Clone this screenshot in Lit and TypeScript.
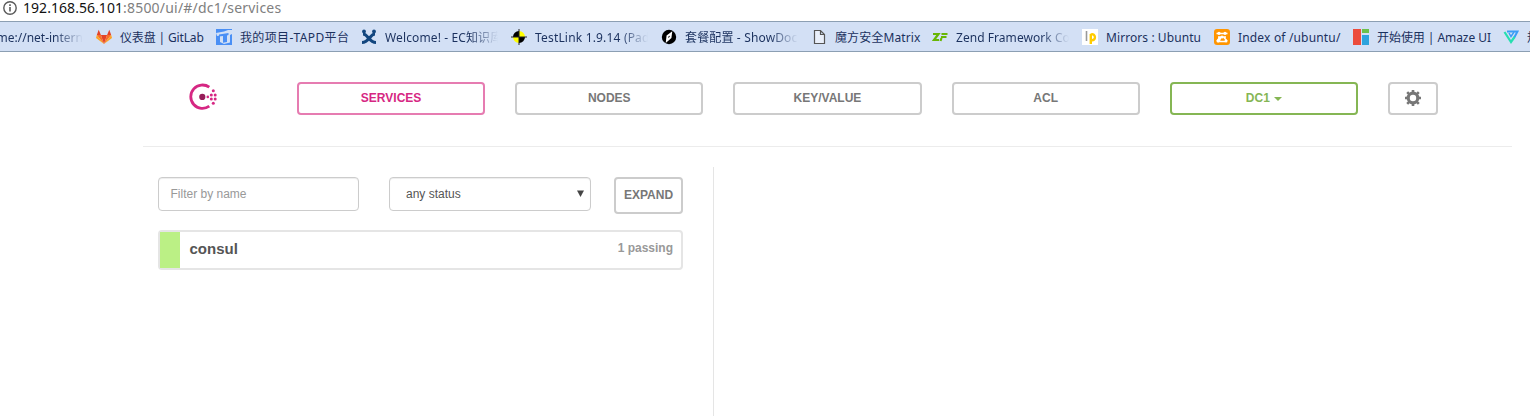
import { LitElement, html, css, svg } from "lit";
import { customElement } from "lit/decorators.js";

interface Bookmark {
  label: string;
  width: number;
  spacing: number;
  icon: unknown;
  fade?: boolean;
}

const ICONS = {
  gitlab: svg`<path fill="#e24329" d="M8 15 4.9 6h6.2z"/><path fill="#fc6d26" d="M8 15 4.9 6H.8zM8 15l3.1-9h4.1z"/><path fill="#fca326" d="M.8 6 0 9.1 8 15zM15.200 6l.8 3.100L8 15z"/><path fill="#e24329" d="M.8 6 2.700.8 4.900 6zM15.200 6 13.300.8 11.100 6z"/>`,
  tapd: svg`<path fill="#4a8ff5" d="M0 0h16v16H0z"/><path fill="#d3e0f5" d="M0 4 8 2.500 12 1h4v4l-2 1v7.500L8 15l-4-2V6.500L1 7z"/><path fill="#4a8ff5" d="M3 5.500 12.500 4v2L11 6.500V13l-4 .8V7l-4 .5z"/>`,
  confluence: svg`<path fill="none" stroke="#12467f" stroke-width="3" d="M2 5c5 0 6 8.500 13 8.500M14 5C9 5 8 13.500 1 13.500"/><circle cx="3" cy="2.500" r="1.900" fill="#12467f"/><circle cx="13" cy="2.500" r="1.900" fill="#12467f"/>`,
  testlink: svg`<path fill="#000" d="M8 2a6 6 0 0 0-6 6h6zM8 14a6 6 0 0 0 6-6H8z"/><path fill="#ff0" d="M8 2a6 6 0 0 1 6 6H8zM8 14a6 6 0 0 1-6-6h6z"/><path stroke="#222" d="M8 0v16M0 8h16"/>`,
  showdoc: svg`<circle cx="8" cy="8" r="7.200" fill="#000"/><path fill="none" stroke="#fff" stroke-width="2" d="M6 11.500 6.500 7 10 4.500 9.500 8.500z"/>`,
  page: svg`<path fill="#e9effa" stroke="#555" stroke-width="1.200" d="M3.500 1.500h6l4 4v9h-10zM9.500 1.500v4h4"/>`,
  zend: svg`<path fill="none" stroke="#68b604" stroke-width="2.200" d="M1 5h5.500L2 11h5M9.500 5H15.500M9 8h5.500M8.500 12l1-3"/>`,
  launchpad: svg`<path fill="#fff" d="M0 0h16v16H0z"/><path stroke="#999" stroke-width="1.600" d="M4.500 2v10"/><path fill="none" stroke="#fc0" stroke-width="2.400" d="M8.800 15V5M8.800 5.500c5-2 6 7 0 5.500"/>`,
  mirror: svg`<rect width="16" height="16" rx="3" fill="#ff9500"/><path fill="none" stroke="#fff" stroke-width="1.500" d="M2.500 4.500h11M4 8h8M6 8 3 12M7 8l-2 4.500h6M10 8.500l3 3.500"/><g fill="#fff"><circle cx="5" cy="4.300" r="1.600"/><circle cx="11" cy="4.300" r="1.600"/><circle cx="8" cy="8" r="1.500"/><circle cx="4" cy="12" r="1.500"/><circle cx="12" cy="12" r="1.500"/></g>`,
  amaze: svg`<path fill="#ec4c3c" d="M0 0h8v16H0z"/><path fill="#6cc04a" d="M9 0h7v4H9z"/><path fill="#2ea3dd" d="M9 6h7v10H9z"/>`,
  vector: svg`<path fill="none" stroke="#3a9cf5" stroke-width="2" d="M4 2.500h10.500L11 9"/><path fill="none" stroke="#25dfb0" stroke-width="2.200" d="M1.500 3 8 13l3.500-5"/><path fill="none" stroke="#3a9cf5" stroke-width="1.500" d="m6 4 2 3.500L11 3"/>`,
};

const BOOKMARKS: Bookmark[] = [
  { label: "仪表盘 | GitLab", width: 120, spacing: -0.15, icon: ICONS.gitlab },
  { label: "我的项目-TAPD平台", width: 145, spacing: 0.35, icon: ICONS.tapd },
  { label: "Welcome! - EC知识库", width: 150, spacing: 0.12, icon: ICONS.confluence, fade: true },
  { label: "TestLink 1.9.14 (Padawan)", width: 150, spacing: 0.18, icon: ICONS.testlink, fade: true },
  { label: "套餐配置 - ShowDoc", width: 150, spacing: 0.15, icon: ICONS.showdoc, fade: true },
  { label: "魔方安全Matrix", width: 121, spacing: 0.1, icon: ICONS.page },
  { label: "Zend Framework Coding", width: 150, spacing: 0.05, icon: ICONS.zend, fade: true },
  { label: "Mirrors : Ubuntu", width: 132, spacing: 0.08, icon: ICONS.launchpad },
  { label: "Index of /ubuntu/", width: 139, spacing: 0.17, icon: ICONS.mirror },
  { label: "开始使用 | Amaze UI", width: 150, spacing: -0.06, icon: ICONS.amaze },
  { label: "规范", width: 150, spacing: 0, icon: ICONS.vector },
];

@customElement("browser-chrome")
class BrowserChrome extends LitElement {
  static styles = css`
    :host { display: block; font-family: "Noto Sans", "Noto Sans CJK SC", sans-serif; }
    .address { display: flex; align-items: center; height: 21px; box-sizing: border-box; padding: 0 0 5px 3px; gap: 6px; font-size: 14px; line-height: 16px; color: #808080; white-space: pre; }
    .url { letter-spacing: 0.2px; }
    .address b { font-weight: 400; color: #111; letter-spacing: 0.05px; }
    .bar { display: flex; align-items: center; height: 31px; box-sizing: border-box; overflow: hidden; background: #d3e0f5; border-top: 1px solid #8c9fb3; border-bottom: 1px solid #8c9fb3; font-size: 12px; line-height: 20px; color: #1b315e; white-space: nowrap; }
    .first { flex: none; width: 83px; margin-right: 13px; padding-top: 2px; display: flex; justify-content: flex-end; overflow: hidden; }
    .item { flex: none; display: flex; align-items: center; gap: 8px; box-sizing: border-box; padding-right: 13px; }
    .item svg { flex: none; width: 16px; height: 16px; }
    .label { flex: 1; overflow: hidden; padding-top: 2px; }
    .item:not(.fade) .label { overflow: visible; }
    .fade .label, .first { -webkit-mask-image: linear-gradient(to left, transparent, #000 28px); mask-image: linear-gradient(to left, transparent, #000 28px); }
  `;

  render() {
    return html`
      <div class="address">
        <svg width="14" height="14" viewBox="0 0 14 14"><circle cx="7" cy="7" r="6.200" fill="none" stroke="#5a5a5a" stroke-width="1.400"/><path stroke="#5a5a5a" stroke-width="1.600" d="M7 6v4.500M7 3.300v1.600"/></svg>
        <span class="url"><b>192.168.56.101</b>:8500/ui/#/dc1/services</span>
      </div>
      <div class="bar">
        <div class="first"><span>me://net-intern</span></div>
        ${BOOKMARKS.map(
          (b) => html`<div class="item ${b.fade ? "fade" : ""}" style="width:${b.width}px">
            <svg viewBox="0 0 16 16">${b.icon}</svg>
            <span class="label" style="letter-spacing:${b.spacing}px">${b.label}</span>
          </div>`,
        )}
      </div>
    `;
  }
}

@customElement("app-root")
class AppRoot extends LitElement {
  static styles = css`
    :host { display: block; height: 416px; overflow: hidden; background: #fff; font-family: "Liberation Sans", Arial, sans-serif; font-size: 12px; color: #555; }
    .page { margin: 0 18px 0 143px; }
    .nav { display: flex; gap: 30px; height: 95px; box-sizing: border-box; padding: 30px 0 0 46px; border-bottom: 1px solid #ececec; }
    .logo { flex: none; width: 78px; }
    .logo svg { display: block; margin-top: 1px; }
    .btn { flex: none; display: flex; align-items: center; justify-content: center; box-sizing: border-box; border: 2px solid #ccc; border-radius: 4px; color: #777; font-weight: 700; background: #fff; }
    .tab { width: 188.200px; height: 33px; padding-bottom: 2px; }
    .services { border-color: #e67cb1; color: #d62783; }
    .dc { border-color: #85b654; color: #85b654; }
    .gear { width: 50px; height: 33px; padding-bottom: 1px; }
    .caret { margin: 3px 0 0 4px; border: 4px solid transparent; border-top-color: currentColor; border-bottom: 0; }
    .panel { width: 571px; height: 249px; margin-top: 20px; box-sizing: border-box; border-right: 1px solid #e5e5e5; padding: 10px 30px 0 15px; }
    .filters { display: flex; align-items: flex-start; }
    .field { display: flex; align-items: center; justify-content: space-between; box-sizing: border-box; height: 34px; border: 1px solid #ccc; border-radius: 4px; box-shadow: inset 0 1px 1px rgba(0, 0, 0, 0.075); }
    .name { width: 201px; padding: 0 12px 1px 11.500px; color: #999; }
    .status { width: 202px; margin-left: 30px; padding: 0 6px 1px 16px; }
    .expand { width: 69px; height: 37px; margin-left: 23px; padding-bottom: 1px; }
    .service { display: flex; margin-top: 16px; height: 40px; box-sizing: border-box; border: 2px solid #e5e5e5; border-radius: 4px; font-weight: 700; }
    .health { width: 20px; background: #bbf085; }
    .title { flex: 1; padding: 8px 0 0 9.500px; font-size: 15px; line-height: 17px; }
    .count { padding: 9px 8px 0 0; line-height: 14px; color: #999; }
  `;

  render() {
    return html`
      <browser-chrome></browser-chrome>
      <div class="page">
        <div class="nav">
          <div class="logo">
            <svg width="28" height="28" viewBox="0 0 28 28">
              <path fill="none" stroke="#d62783" stroke-width="2.800" d="M20.300 4.200A11.700 11.700 0 1 0 20.300 23.200"/>
              <circle cx="13.300" cy="13.900" r="3.100" fill="#961d59"/>
              <g fill="#d62783"><circle cx="18.800" cy="13.900" r="1.300"/><circle cx="22.300" cy="11.900" r="1.500"/><circle cx="22.300" cy="16" r="1.500"/><circle cx="26.200" cy="11.900" r="1.500"/><circle cx="26.200" cy="16" r="1.500"/><circle cx="24.300" cy="7.700" r="1.500"/><circle cx="24.300" cy="20.200" r="1.500"/></g>
            </svg>
          </div>
          <div class="btn tab services">SERVICES</div>
          <div class="btn tab">NODES</div>
          <div class="btn tab">KEY/VALUE</div>
          <div class="btn tab">ACL</div>
          <div class="btn tab dc">DC1<span class="caret"></span></div>
          <div class="btn gear">
            <svg width="16" height="16" viewBox="0 0 16 16"><circle cx="8" cy="8" r="4.800" fill="none" stroke="#777" stroke-width="3.200"/><path stroke="#777" stroke-width="2.600" d="M8 0v3M8 13v3M0 8h3M13 8h3M2.200 2.200l2 2M11.800 11.800l2 2M2.200 13.800l2-2M11.800 4.200l2-2"/></svg>
          </div>
        </div>
        <div class="panel">
          <div class="filters">
            <div class="field name">Filter by name</div>
            <div class="field status"><span>any status</span><svg width="7" height="7" viewBox="0 0 7 7"><path fill="#444" d="M0 .5h7L3.500 7z"/></svg></div>
            <div class="btn expand">EXPAND</div>
          </div>
          <div class="service">
            <div class="health"></div>
            <div class="title">consul</div>
            <div class="count">1 passing</div>
          </div>
        </div>
      </div>
    `;
  }
}
